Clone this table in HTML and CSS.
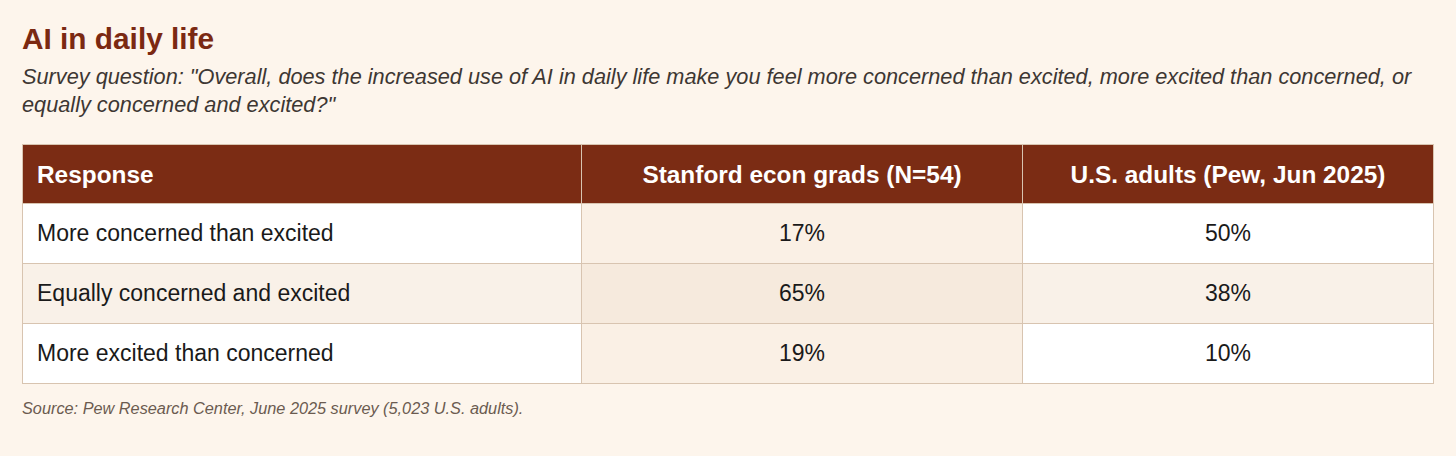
FILE: index.html
```html
<!DOCTYPE html>
<html lang="en">
<head>
<meta charset="utf-8">
<title>AI in daily life</title>
<link rel="stylesheet" href="styles.css">
</head>
<body>
<main class="page">
  <h1 class="title">AI in daily life</h1>
  <p class="question">Survey question: "Overall, does the increased use of AI in daily life make you feel more concerned than excited, more excited than concerned, or equally concerned and excited?"</p>
  <table class="data">
    <colgroup>
      <col class="col-resp">
      <col class="col-grads">
      <col class="col-adults">
    </colgroup>
    <thead>
      <tr>
        <th class="c-resp">Response</th>
        <th class="c-num">Stanford econ grads (N=54)</th>
        <th class="c-num">U.S. adults (Pew, Jun 2025)</th>
      </tr>
    </thead>
    <tbody>
      <tr>
        <td class="c-resp">More concerned than excited</td>
        <td class="c-num c-hl">17%</td>
        <td class="c-num">50%</td>
      </tr>
      <tr>
        <td class="c-resp">Equally concerned and excited</td>
        <td class="c-num c-hl">65%</td>
        <td class="c-num">38%</td>
      </tr>
      <tr>
        <td class="c-resp">More excited than concerned</td>
        <td class="c-num c-hl">19%</td>
        <td class="c-num">10%</td>
      </tr>
    </tbody>
  </table>
  <p class="source">Source: Pew Research Center, June 2025 survey (5,023 U.S. adults).</p>
</main>
</body>
</html>
```
FILE: styles.css
```css
html, body {
  margin: 0;
  padding: 0;
  background: #fdf5ec;
}
body {
  font-family: "Liberation Sans", Arial, sans-serif;
  color: #1a1a1a;
}
.page {
  padding: 20px 22px 0 22px;
}
.title {
  margin: 0;
  font-size: 29.8px;
  line-height: 37px;
  font-weight: bold;
  color: #7b2912;
}
.question {
  margin: 6px 0 0 0;
  font-size: 21.72px;
  line-height: 28px;
  font-style: italic;
  color: #3d3733;
}
.data {
  margin-top: 25px;
  width: 100%;
  table-layout: fixed;
  border-collapse: collapse;
  font-size: 23px;
}
.col-resp {
  width: 559px;
}
.col-grads {
  width: 441px;
}
.data th, .data td {
  border: 1px solid #d8c4b0;
}
.data th {
  background: #7b2c14;
  color: #ffffff;
  font-size: 24.4px;
  font-weight: bold;
  line-height: 27px;
  padding: 16px 14px 15px 14px;
}
.data td {
  background: #ffffff;
  line-height: 24px;
  padding: 17px 14px 18px 14px;
}
.data tbody tr:nth-child(even) td {
  background: #f9f1e8;
}
.data td.c-hl {
  background: #faf0e5;
}
.data tbody tr:nth-child(even) td.c-hl {
  background: #f6eadd;
}
.c-resp {
  text-align: left;
}
.c-num {
  text-align: center;
}
.source {
  margin: 14px 0 0 0;
  font-size: 16.3px;
  line-height: 20px;
  font-style: italic;
  color: #6b5b50;
}
```
